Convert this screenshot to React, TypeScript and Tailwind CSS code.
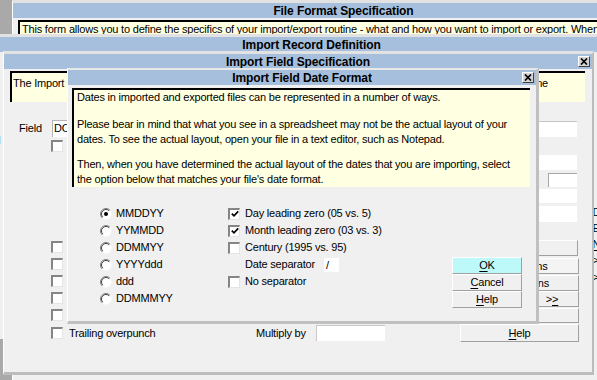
import React from 'react'

function TitleBar({ title, close }: { title: string; close?: boolean }) {
    return (
        <div className="relative h-[15px] shrink-0 bg-[#a6bfdc] flex items-center justify-center text-[12px] font-bold leading-none tracking-[-0.1px]">
            {title}
            {close && (
                <div className="absolute right-[2px] top-[2px] w-[12px] h-[11px] bg-[#d4d4d4] border border-t-white border-l-white border-r-[#404040] border-b-[#404040] flex items-center justify-center">
                    <svg width="8" height="7" viewBox="0 0 8 7">
                        <path d="M1 0.5 L7 6.5 M7 0.5 L1 6.5" stroke="#000" strokeWidth="1.7" />
                    </svg>
                </div>
            )}
        </div>
    )
}

function Check({ on }: { on?: boolean }) {
    return (
        <span className="inline-flex w-[12px] h-[12px] shrink-0 items-center justify-center bg-white border-t-2 border-l-2 border-t-[#858585] border-l-[#858585] border-r border-b border-r-[#e4e4e4] border-b-[#e4e4e4]">
            {on && (
                <svg width="8" height="8" viewBox="0 0 8 8">
                    <path d="M0.8 3.6 L3 5.8 L7.2 1.4" stroke="#000" strokeWidth="1.7" fill="none" />
                </svg>
            )}
        </span>
    )
}

function Radio({ on }: { on?: boolean }) {
    return (
        <svg width="12" height="12" viewBox="0 0 12 12" className="shrink-0">
            <circle cx="6" cy="6" r="5.5" fill="#fff" />
            <path d="M2.1 9.9 A5.5 5.5 0 0 1 9.9 2.1" stroke="#808080" strokeWidth="1" fill="none" />
            <path d="M2.8 9.2 A4.5 4.5 0 0 1 9.2 2.8" stroke="#404040" strokeWidth="1" fill="none" />
            {on && <circle cx="6" cy="6" r="2" fill="#000" />}
        </svg>
    )
}

function Btn({ children, className }: { children?: React.ReactNode; className?: string }) {
    return (
        <button
            type="button"
            className={`flex items-center justify-center shrink-0 border border-t-white border-l-white border-r-[#a0a0a0] border-b-[#a0a0a0] ${className ?? ''}`}
        >
            {children}
        </button>
    )
}

function U({ children }: { children: React.ReactNode }) {
    return <span className="underline underline-offset-[2px]">{children}</span>
}

const radios = ['MMDDYY', 'YYMMDD', 'DDMMYY', 'YYYYddd', 'ddd', 'DDMMMYY']

export default function App() {
    return (
        <div className="relative w-[597px] h-[380px] overflow-hidden bg-[#a9a9a9] text-[11px] leading-[13px] tracking-[-0.2px] text-black font-['Liberation_Sans',Arial,sans-serif]">
            {/* File Format Specification */}
            <div className="absolute left-[12px] top-0 w-[662px] h-[400px] flex flex-col bg-[#f0f0f0] border-t-[3px] border-t-[#e2e2e2] border-l border-l-white">
                <TitleBar title="File Format Specification" />
                <div className="mt-[2px] ml-[5px] w-[700px] h-[30px] bg-[#ffffe1] border-t-2 border-l-2 border-t-black border-l-black pl-[2px] pt-[1px] whitespace-nowrap">
                    This form allows you to define the specifics of your import/export routine - what and how you want to import or export. When
                </div>
            </div>

            {/* Import Record Definition */}
            <div className="absolute left-0 top-[34px] w-[623px] h-[305px] flex flex-col bg-[#f0f0f0] border-t-[3px] border-t-[#e2e2e2]">
                <TitleBar title="Import Record Definition" />
                <div className="flex flex-1">
                    <div className="w-[3px] flex flex-col items-end overflow-hidden">
                        <div className="mt-[1px] w-[20px] h-[5px] shrink-0 border-t border-b border-black" />
                        <div className="mt-[76px] whitespace-nowrap">Fixed</div>
                    </div>
                    <div className="ml-[592px] flex flex-col whitespace-nowrap">
                        <span className="mt-[154px] h-[16px]">Delete</span>
                        <span className="h-[16px]">Edit</span>
                        <span className="h-[16px]"><U>N</U>ew</span>
                        <span className="h-[17px]">&gt;&gt;</span>
                        <span className="h-[16px]">&gt;&gt;</span>
                    </div>
                </div>
            </div>

            {/* Import Field Specification */}
            <div className="absolute left-[3px] top-[51px] w-[591px] h-[324px] flex flex-col bg-[#f0f0f0] border-t-[3px] border-t-[#e2e2e2] border-l border-l-white border-r-2 border-r-[#bcbcbc] border-b-[3px] border-b-[#bcbcbc]">
                <TitleBar title="Import Field Specification" close />
                <div className="mt-[2px] ml-[6px] w-[575px] h-[31px] shrink-0 bg-[#ffffe1] border-t-2 border-l-2 border-t-black border-l-black flex justify-between pl-[1px] pr-[37px] pt-[4px] whitespace-nowrap">
                    <span>The Import Field Specification screen describes each field of the record</span>
                    <span>one</span>
                </div>
                <div className="flex mt-[18px] h-[204px] shrink-0">
                    <div className="flex flex-col w-[120px]">
                        <div className="flex items-center h-[17px]">
                            <span className="ml-[15px] w-[33px]">Field</span>
                            <span className="w-[60px] h-[17px] bg-white border-t border-l border-[#b4b4b4] pl-[1px] leading-[15px]">DOB</span>
                        </div>
                        <div className="ml-[47px] mt-[3px] flex"><Check /></div>
                        <div className="ml-[47px] mt-[89px] flex"><Check /></div>
                        <div className="ml-[47px] mt-[5px] flex"><Check /></div>
                        <div className="ml-[47px] mt-[5px] flex"><Check /></div>
                        <div className="ml-[47px] mt-[5px] flex"><Check /></div>
                        <div className="ml-[47px] mt-[5px] flex"><Check /></div>
                    </div>
                    <div className="ml-auto mr-[13px] w-[120px] flex flex-col items-end">
                        <div className="mt-[1px] mr-[2px] w-[80px] h-[16px] bg-white border-t border-[#c4c4c4]" />
                        <div className="mt-[18px] mr-[2px] w-[80px] h-[15px] bg-white" />
                        <div className="mt-[3px] mr-[2px] w-[29px] h-[14px] bg-white border-t border-l border-[#a8a8a8]" />
                        <div className="mt-[2px] mr-[2px] w-[80px] h-[14px] bg-white" />
                        <div className="mt-[3px] mr-[2px] w-[80px] h-[16px] bg-white" />
                        <Btn className="mt-[18px] mr-[1px] w-[60px] h-[16px]" />
                        <Btn className="mt-[2px] w-[119px] h-[16px] bg-[#f4f4f4]">
                            <span className="ml-[-1px]">Translations</span>
                        </Btn>
                        <Btn className="mt-[1px] w-[119px] h-[16px]">Conversions</Btn>
                        <Btn className="w-[54px] h-[16px]">&gt;<U>&gt;</U></Btn>
                        <Btn className="mt-[1px] w-[54px] h-[15px]" />
                    </div>
                </div>
                <div className="flex items-center h-[18px] shrink-0">
                    <div className="w-[252px] flex items-center">
                        <span className="ml-[47px] flex"><Check /></span>
                        <span className="ml-[6px]">Trailing overpunch</span>
                    </div>
                    <span className="w-[60px]">Multiply by</span>
                    <span className="w-[69px] h-[16px] bg-white border-t border-l border-[#c8c8c8]" />
                    <Btn className="ml-auto mr-[13px] w-[119px] h-[18px]">
                        <U>H</U>elp
                    </Btn>
                </div>
            </div>

            {/* Import Field Date Format */}
            <div className="absolute left-[67px] top-[68px] w-[472px] h-[256px] flex flex-col bg-[#f0f0f0] border-t-2 border-t-[#e8e8e8] border-l border-l-white border-r-[3px] border-r-[#c0c0c0] border-b-[3px] border-b-[#c0c0c0]">
                <TitleBar title="Import Field Date Format" close />
                <div className="mt-[3px] ml-[4px] w-[458px] h-[99px] shrink-0 bg-[#ffffe1] border-t-2 border-l-2 border-t-black border-l-black pl-[3px] leading-[15px] whitespace-nowrap">
                    <p>Dates in imported and exported files can be represented in a number of ways.</p>
                    <p className="mt-[12px]">
                        Please bear in mind that what you see in a spreadsheet may not be the actual layout of your
                        <br />
                        dates. To see the actual layout, open your file in a text editor, such as Notepad.
                    </p>
                    <p className="mt-[10px]">
                        Then, when you have determined the actual layout of the dates that you are importing, select
                        <br />
                        the option below that matches your file's date format.
                    </p>
                </div>
                <div className="flex mt-[18px]">
                    <div className="ml-[32px] w-[128px] flex flex-col">
                        {radios.map((r, i) => (
                            <div key={r} className="h-[17px] flex items-center gap-[4px]">
                                <Radio on={i === 0} />
                                <span>{r}</span>
                            </div>
                        ))}
                    </div>
                    <div className="w-[224px] flex flex-col">
                        <div className="h-[17px] flex items-center gap-[5px]">
                            <Check on />
                            <span>Day leading zero (05 vs. 5)</span>
                        </div>
                        <div className="h-[17px] flex items-center gap-[5px]">
                            <Check on />
                            <span>Month leading zero (03 vs. 3)</span>
                        </div>
                        <div className="h-[17px] flex items-center gap-[5px]">
                            <Check />
                            <span>Century (1995 vs. 95)</span>
                        </div>
                        <div className="h-[17px] flex items-center">
                            <span className="ml-[17px] w-[79px]">Date separator</span>
                            <span className="w-[15px] h-[14px] bg-white pl-[2px] leading-[14px]">/</span>
                        </div>
                        <div className="h-[17px] flex items-center gap-[5px]">
                            <Check />
                            <span>No separator</span>
                        </div>
                    </div>
                    <div className="w-[70px] mt-[52px] flex flex-col">
                        <Btn className="w-[70px] h-[17px] bg-[#bef9f9]"><U>O</U>K</Btn>
                        <Btn className="w-[70px] h-[17px]"><U>C</U>ancel</Btn>
                        <Btn className="w-[70px] h-[17px]"><U>H</U>elp</Btn>
                    </div>
                </div>
            </div>
        </div>
    )
}
